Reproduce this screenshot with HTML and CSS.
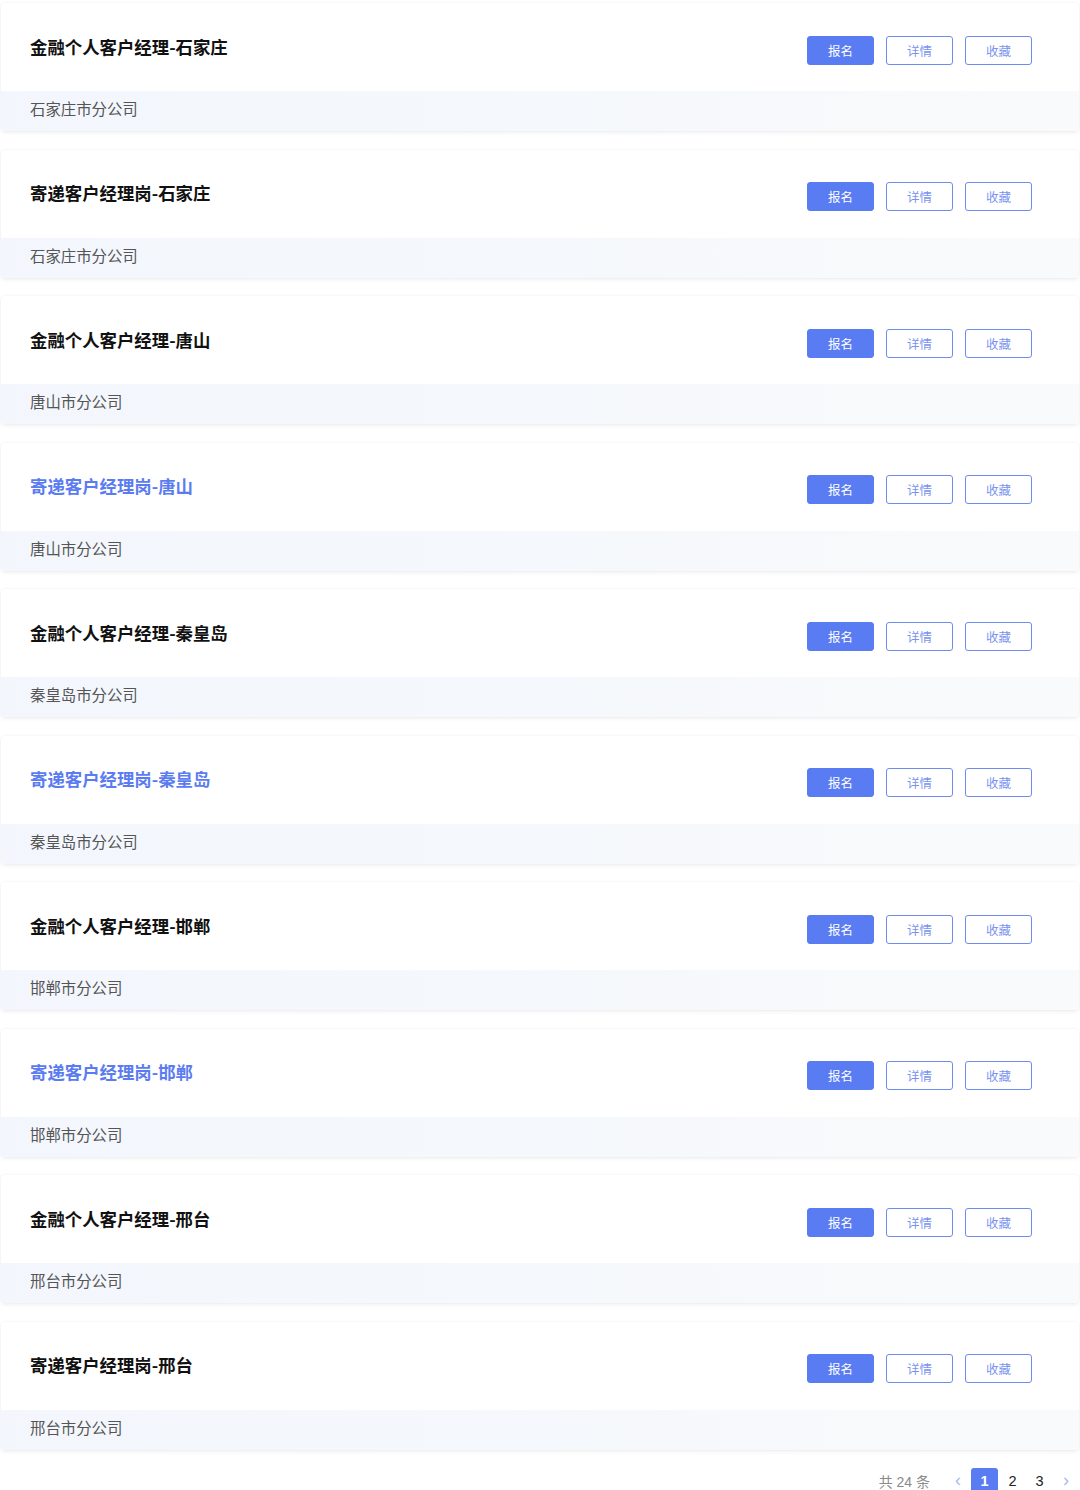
FILE: index.html
```html
<!DOCTYPE html>
<html lang="zh-CN">
<head>
<meta charset="UTF-8" />
<meta name="viewport" content="width=device-width, initial-scale=1" />
<title>岗位列表</title>
<link rel="stylesheet" href="styles.css">
</head>
<body>

<div class="lista">
  <div class="cartao">
    <div class="topo">
      <div class="titulo">金融个人客户经理-石家庄</div>
      <div class="acoes">
        <button class="btn cheio">报名</button>
        <button class="btn">详情</button>
        <button class="btn">收藏</button>
      </div>
    </div>
    <div class="rodape">石家庄市分公司</div>
  </div>

  <div class="cartao">
    <div class="topo">
      <div class="titulo">寄递客户经理岗-石家庄</div>
      <div class="acoes">
        <button class="btn cheio">报名</button>
        <button class="btn">详情</button>
        <button class="btn">收藏</button>
      </div>
    </div>
    <div class="rodape">石家庄市分公司</div>
  </div>

  <div class="cartao">
    <div class="topo">
      <div class="titulo">金融个人客户经理-唐山</div>
      <div class="acoes">
        <button class="btn cheio">报名</button>
        <button class="btn">详情</button>
        <button class="btn">收藏</button>
      </div>
    </div>
    <div class="rodape">唐山市分公司</div>
  </div>

  <div class="cartao">
    <div class="topo">
      <div class="titulo azul">寄递客户经理岗-唐山</div>
      <div class="acoes">
        <button class="btn cheio">报名</button>
        <button class="btn">详情</button>
        <button class="btn">收藏</button>
      </div>
    </div>
    <div class="rodape">唐山市分公司</div>
  </div>

  <div class="cartao">
    <div class="topo">
      <div class="titulo">金融个人客户经理-秦皇岛</div>
      <div class="acoes">
        <button class="btn cheio">报名</button>
        <button class="btn">详情</button>
        <button class="btn">收藏</button>
      </div>
    </div>
    <div class="rodape">秦皇岛市分公司</div>
  </div>

  <div class="cartao">
    <div class="topo">
      <div class="titulo azul">寄递客户经理岗-秦皇岛</div>
      <div class="acoes">
        <button class="btn cheio">报名</button>
        <button class="btn">详情</button>
        <button class="btn">收藏</button>
      </div>
    </div>
    <div class="rodape">秦皇岛市分公司</div>
  </div>

  <div class="cartao">
    <div class="topo">
      <div class="titulo">金融个人客户经理-邯郸</div>
      <div class="acoes">
        <button class="btn cheio">报名</button>
        <button class="btn">详情</button>
        <button class="btn">收藏</button>
      </div>
    </div>
    <div class="rodape">邯郸市分公司</div>
  </div>

  <div class="cartao">
    <div class="topo">
      <div class="titulo azul">寄递客户经理岗-邯郸</div>
      <div class="acoes">
        <button class="btn cheio">报名</button>
        <button class="btn">详情</button>
        <button class="btn">收藏</button>
      </div>
    </div>
    <div class="rodape">邯郸市分公司</div>
  </div>

  <div class="cartao">
    <div class="topo">
      <div class="titulo">金融个人客户经理-邢台</div>
      <div class="acoes">
        <button class="btn cheio">报名</button>
        <button class="btn">详情</button>
        <button class="btn">收藏</button>
      </div>
    </div>
    <div class="rodape">邢台市分公司</div>
  </div>

  <div class="cartao">
    <div class="topo">
      <div class="titulo">寄递客户经理岗-邢台</div>
      <div class="acoes">
        <button class="btn cheio">报名</button>
        <button class="btn">详情</button>
        <button class="btn">收藏</button>
      </div>
    </div>
    <div class="rodape">邢台市分公司</div>
  </div>
</div>

<div class="paginacao">
  <span class="total">共 24 条</span>
  <span class="seta">&lsaquo;</span>
  <span class="pagina ativa">1</span>
  <span class="pagina">2</span>
  <span class="pagina">3</span>
  <span class="seta">&rsaquo;</span>
</div>

</body>
</html>
```

FILE: styles.css
```css
/* Reset básico */
* {
  box-sizing: border-box;
}
body {
  margin: 0;
  background: #fff;
  font-family: "Noto Sans CJK SC", "Noto Sans", sans-serif;
  color: #111;
}
.lista {
  padding: 3px 1px 0 1px;
}
.cartao {
  background: #fff;
  border-radius: 4px;
  height: 128px;
  margin-bottom: 18.56px;
  box-shadow:
    0 0 3px #0000000f,
    0 2px 4px #0000000d;
  overflow: hidden;
}
.topo {
  height: 88px;
  display: flex;
  align-items: center;
  justify-content: space-between;
  padding: 0 47px 0 29px;
}
.titulo {
  font-size: 17.4px;
  font-weight: 700;
  color: #111;
  margin-top: -2px;
}
.titulo.azul {
  color: #5b7cf0;
}
.acoes {
  display: flex;
  gap: 12px;
  margin-top: 6px;
}
.btn {
  width: 67px;
  height: 29px;
  border: 1px solid #6f8bef;
  border-radius: 3px;
  background: #fff;
  color: #7a93f0;
  font-family: inherit;
  font-size: 12.5px;
  cursor: pointer;
}
/* Botão principal em azul */
.btn.cheio {
  background: #5a7cf2;
  border-color: #5a7cf2;
  color: #fff;
}
.rodape {
  height: 40px;
  line-height: 34px;
  padding-left: 29px;
  font-size: 15.4px;
  color: #555;
  background: linear-gradient(90deg, #f3f7fd 0%, #f5f8fc 50%, #f9fafb 100%);
}
.paginacao {
  display: flex;
  justify-content: flex-end;
  align-items: center;
  padding: 0 1px 0 0;
  margin-top: -0.5px;
  font-family: "Liberation Sans", "Noto Sans CJK SC", sans-serif;
  font-size: 14.5px;
}
.total {
  color: #8a8a8a;
  font-size: 14px;
  margin-right: 15px;
}
.seta {
  color: #a9b8ee;
  font-size: 18px;
  width: 26px;
  text-align: center;
}
.pagina {
  width: 27px;
  height: 26px;
  line-height: 26px;
  text-align: center;
  color: #222;
  border-radius: 3px;
}
.pagina.ativa {
  background: #5a7cf2;
  color: #fff;
  font-weight: 700;
  margin-right: 1px;
}
```
